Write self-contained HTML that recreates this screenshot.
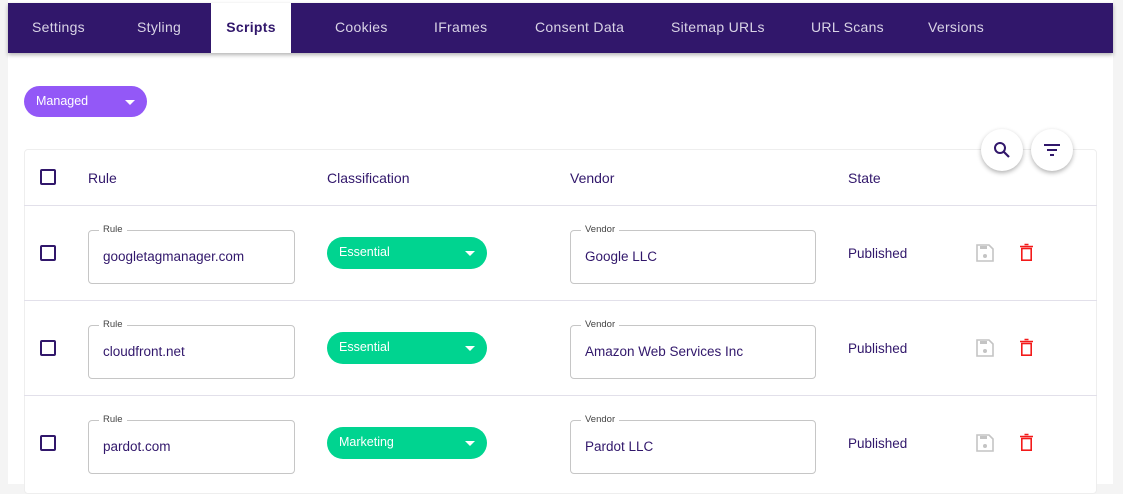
<!DOCTYPE html>
<html><head><style>
*{box-sizing:border-box;margin:0;padding:0}
body{width:1123px;height:484px;overflow:hidden;background:#f4f4f4;font-family:"Liberation Sans",sans-serif;position:relative}
.main{position:absolute;left:8px;top:0;width:1105px;height:484px;background:#fff}
.nav{position:absolute;left:8px;top:3px;width:1105px;height:50px;background:#31176b;box-shadow:0 2px 4px rgba(0,0,0,.3)}
.nav span{position:absolute;top:16px;font-size:14px;color:#d9d4e6;letter-spacing:.3px}
.nav .act{top:0;height:50px;background:#fff;color:#31176b;font-weight:bold;padding-top:16px;text-align:center}
.pill{position:absolute;border-radius:16px;color:#fff;font-size:12.5px}
.pill:after{content:"";position:absolute;right:12px;top:50%;margin-top:-2px;border:5px solid transparent;border-top:5px solid #fff;border-bottom:0}
.card{position:absolute;left:24px;top:149px;width:1073px;height:345px;border:1px solid #eee;border-radius:4px;background:#fff}
.hdr{position:absolute;top:170px;font-size:14px;color:#31176b}
.line{position:absolute;left:24px;width:1073px;height:1px;background:#e2e0ea}
.cb{position:absolute;left:40px;width:16px;height:16px;border:2px solid #31176b;border-radius:2px}
.field{position:absolute;height:54px;border:1px solid #c6c6c6;border-radius:4px;font-size:13.5px;color:#31176b;padding:18px 0 0 14px}
.field i{position:absolute;top:-7px;left:10px;background:#fff;padding:0 4px;font-style:normal;font-size:9.5px;color:#444}
.st{position:absolute;left:848px;font-size:13.5px;color:#31176b}
.fab{position:absolute;top:129px;width:42px;height:42px;border-radius:50%;background:#fff;box-shadow:0 2px 5px rgba(0,0,0,.3)}
</style></head><body>
<div class="main"></div>
<div class="nav">
<span style="left:24px">Settings</span>
<span style="left:129px">Styling</span>
<span class="act" style="left:203px;width:80px">Scripts</span>
<span style="left:327px">Cookies</span>
<span style="left:426px">IFrames</span>
<span style="left:527px">Consent Data</span>
<span style="left:663px">Sitemap URLs</span>
<span style="left:803px">URL Scans</span>
<span style="left:920px">Versions</span>
</div>
<div class="pill" style="left:24px;top:86px;width:123px;height:31px;background:#9358f7;padding:8px 12px">Managed</div>
<div class="card"></div>
<div class="fab" style="left:981px"><svg width="42" height="42" viewBox="0 0 42 42"><circle cx="19" cy="19" r="5" fill="none" stroke="#31176b" stroke-width="2"/><path d="M23 23l5 5" stroke="#31176b" stroke-width="2.2"/></svg></div>
<div class="fab" style="left:1031px"><svg width="42" height="42" viewBox="0 0 42 42"><path d="M13 16h16M16 21h10M19 26h4" stroke="#31176b" stroke-width="2"/></svg></div>
<div class="cb" style="top:169px"></div>
<div class="hdr" style="left:88px">Rule</div>
<div class="hdr" style="left:327px">Classification</div>
<div class="hdr" style="left:570px">Vendor</div>
<div class="hdr" style="left:848px">State</div>
<div class="line" style="top:205px"></div>
<div class="line" style="top:300px"></div>
<div class="line" style="top:395px"></div>

<div class="cb" style="top:245px"></div>
<div class="field" style="left:88px;top:230px;width:207px"><i>Rule</i>googletagmanager.com</div>
<div class="pill" style="left:327px;top:237px;width:160px;height:32px;background:#00d490;padding:8px 12px">Essential</div>
<div class="field" style="left:570px;top:230px;width:246px"><i>Vendor</i>Google LLC</div>
<div class="st" style="top:246px">Published</div>

<div class="cb" style="top:340px"></div>
<div class="field" style="left:88px;top:325px;width:207px"><i>Rule</i>cloudfront.net</div>
<div class="pill" style="left:327px;top:332px;width:160px;height:32px;background:#00d490;padding:8px 12px">Essential</div>
<div class="field" style="left:570px;top:325px;width:246px"><i>Vendor</i>Amazon Web Services Inc</div>
<div class="st" style="top:341px">Published</div>

<div class="cb" style="top:435px"></div>
<div class="field" style="left:88px;top:420px;width:207px"><i>Rule</i>pardot.com</div>
<div class="pill" style="left:327px;top:427px;width:160px;height:32px;background:#00d490;padding:8px 12px">Marketing</div>
<div class="field" style="left:570px;top:420px;width:246px"><i>Vendor</i>Pardot LLC</div>
<div class="st" style="top:436px">Published</div>

<svg style="position:absolute;left:0;top:0" width="1123" height="484">
<g id="ic">
<path d="M977 245h12l4 4v12h-16z" fill="none" stroke="#c4c4c4" stroke-width="1.6"/><rect x="980" y="246" width="7" height="3" fill="#c4c4c4"/><circle cx="985" cy="256" r="2" fill="#c4c4c4"/>
<path d="M1020 246.5h13M1024.5 244.5h4" fill="none" stroke="#f31a1a" stroke-width="1.6"/>
<rect x="1021.8" y="248.5" width="9.4" height="11.7" fill="none" stroke="#f31a1a" stroke-width="1.6"/>
</g>
<use href="#ic" y="95"/><use href="#ic" y="190"/>
</svg>
</body></html>
